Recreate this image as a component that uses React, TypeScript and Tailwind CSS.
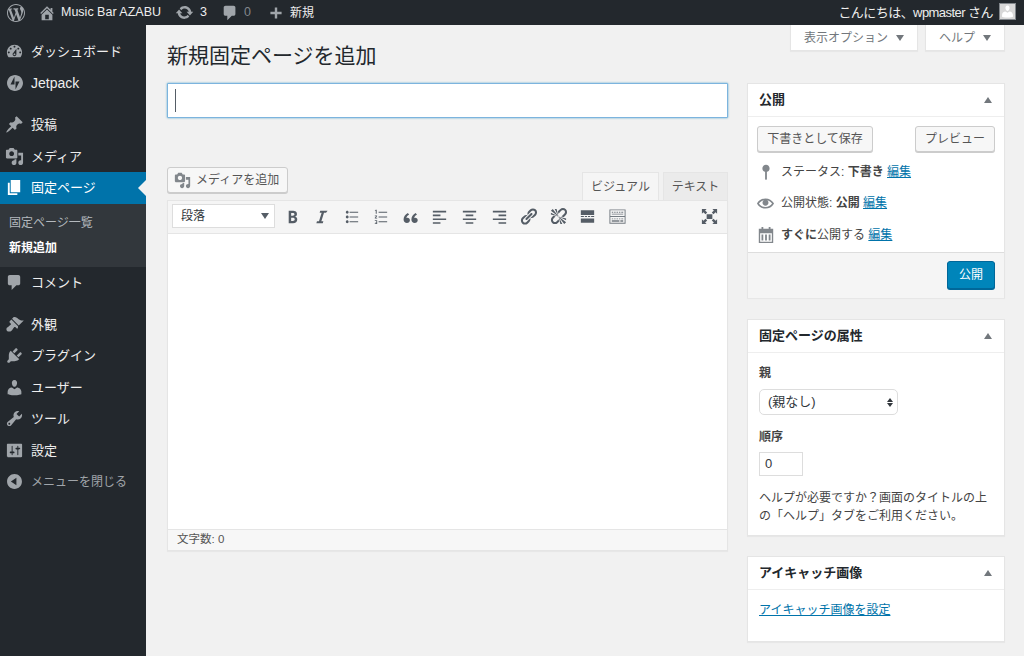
const D = {
  wp: "M20 10c0-5.51-4.49-10-10-10C4.48 0 0 4.49 0 10c0 5.52 4.48 10 10 10 5.51 0 10-4.48 10-10zM7.78 15.37L4.37 6.22c.55-.02 1.17-.08 1.17-.08.5-.06.44-1.13-.06-1.11 0 0-1.45.11-2.37.11-.18 0-.37 0-.58-.01C4.12 2.69 6.87 1.11 10 1.11c2.33 0 4.45.87 6.05 2.34-.68-.11-1.65.39-1.65 1.58 0 .74.45 1.36.9 2.1.35.61.55 1.36.55 2.46 0 1.49-1.4 5-1.4 5l-3.03-8.37c.54-.02.82-.17.82-.17.5-.05.44-1.25-.06-1.22 0 0-1.44.12-2.38.12-.87 0-2.33-.12-2.33-.12-.5-.03-.56 1.2-.06 1.22l.92.08 1.26 3.41zM17.41 10c.24-.64.74-1.87.43-4.25.7 1.29 1.05 2.71 1.05 4.25 0 3.29-1.73 6.24-4.4 7.78.97-2.59 1.94-5.2 2.92-7.78zM6.1 18.09C3.12 16.65 1.11 13.53 1.11 10c0-1.3.23-2.48.72-3.59C3.25 10.3 4.67 14.2 6.1 18.09zm4.03-6.63l2.58 6.98c-.86.29-1.76.45-2.71.45-.79 0-1.57-.11-2.29-.33.81-2.38 1.62-4.74 2.42-7.1z",
  home: "M16 8.5l1.53 1.53-1.06 1.06L10 4.62l-6.47 6.47-1.06-1.06L10 2.5l4 4v-2h2v4zm-6-2.46l6 5.99V18H4v-5.97zM12 17v-5H8v5h4z",
  update: "M10.2 3.28c3.53 0 6.43 2.61 6.92 6h2.08l-3.5 4-3.5-4h2.32c-.45-1.97-2.21-3.45-4.32-3.45-1.45 0-2.73.71-3.54 1.78L4.95 5.66C6.23 4.2 8.11 3.28 10.2 3.28zm-.4 13.44c-3.52 0-6.43-2.61-6.92-6H.8l3.5-4c1.17 1.33 2.33 2.67 3.5 4H5.48c.45 1.97 2.21 3.45 4.32 3.45 1.45 0 2.73-.71 3.54-1.78l1.71 1.95c-1.28 1.46-3.15 2.38-5.25 2.38z",
  comment: "M5 2h9c1.1 0 2 .9 2 2v7c0 1.1-.9 2-2 2h-2l-5 5v-5H5c-1.1 0-2-.9-2-2V4c0-1.1.9-2 2-2z",
  plus: "M17 8.5v3h-5.5V17h-3v-5.5H3v-3h5.5V3h3v5.5z",
  dashboard: "M3.76 16h12.48c1.1-1.37 1.76-3.11 1.76-5 0-4.42-3.58-8-8-8s-8 3.58-8 8c0 1.89.66 3.63 1.76 5zM10 4c.55 0 1 .45 1 1s-.45 1-1 1-1-.45-1-1 .45-1 1-1zM6 6c.55 0 1 .45 1 1s-.45 1-1 1-1-.45-1-1 .45-1 1-1zm8 0c.55 0 1 .45 1 1s-.45 1-1 1-1-.45-1-1 .45-1 1-1zm-5.37 5.55L12 7v6c0 1.1-.9 2-2 2s-2-.9-2-2c0-.57.24-1.08.63-1.45zM4 10c.55 0 1 .45 1 1s-.45 1-1 1-1-.45-1-1 .45-1 1-1zm12 0c.55 0 1 .45 1 1s-.45 1-1 1-1-.45-1-1 .45-1 1-1zm-5 3c0-.55-.45-1-1-1s-1 .45-1 1 .45 1 1 1 1-.45 1-1z",
  pin: "M10.44 3.02l1.82-1.82 6.36 6.35-1.83 1.82c-1.05-.68-2.48-.57-3.41.36l-.75.75c-.92.93-1.04 2.35-.35 3.41l-1.83 1.82-2.41-2.41-2.8 2.79c-.42.42-3.38 2.71-3.8 2.29s1.86-3.39 2.28-3.81l2.79-2.79L4.1 9.36l1.83-1.82c1.05.69 2.48.57 3.4-.36l.75-.75c.93-.92 1.05-2.35.36-3.41z",
  media: "M13 11V4c0-.55-.45-1-1-1h-1.67L9 1H5L3.67 3H2c-.55 0-1 .45-1 1v7c0 .55.45 1 1 1h10c.55 0 1-.45 1-1zM7 4.5c1.38 0 2.5 1.12 2.5 2.5S8.38 9.5 7 9.5 4.5 8.38 4.5 7 5.62 4.5 7 4.5zM14 6h5v10.5c0 1.38-1.12 2.5-2.5 2.5S14 17.88 14 16.5s1.12-2.5 2.5-2.5c.17 0 .34.02.5.05V9h-3V6zm-4 8.05V13h2v3.5c0 1.38-1.12 2.5-2.5 2.5S7 17.88 7 16.5 8.12 14 9.5 14c.17 0 .34.02.5.05z",
  page: "M6 15V2h10v13H6zm-1 1h8v2H3V5h2v11z",
  appearance: "M14.48 11.06L7.41 3.99l1.5-1.5c.5-.56 2.3-.47 3.51.32 1.21.8 1.43 1.28 2.91 2.1 1.18.64 2.45 1.26 4.45.85zm-.71.71L6.7 4.7 4.93 6.47c-.39.39-.39 1.02 0 1.41l1.06 1.06c.39.39.39 1.03 0 1.42-.6.6-1.43 1.11-2.21 1.69-.35.26-.7.53-1.01.84C1.43 13.23.99 15.61 2.2 16.8c1.19 1.2 3.57.76 4.92-.6.31-.31.58-.66.84-1.01.58-.78 1.09-1.61 1.69-2.21.39-.39 1.03-.39 1.42 0l1.06 1.06c.39.39 1.02.39 1.41 0z",
  plugins: "M13.11 4.36L9.87 7.6 8 5.73l3.24-3.24c.35-.34 1.05-.2 1.56.32.52.51.66 1.21.31 1.55zm-8 1.77l.91-1.12 9.01 9.01-1.19.84c-.71.71-2.63 1.16-3.82 1.16H6.14L4.9 17.26c-.59.59-1.54.59-2.12 0-.59-.58-.59-1.53 0-2.12l1.24-1.24v-3.88c0-1.13.4-3.19 1.09-3.89zm7.26 3.97l3.24-3.24c.34-.35 1.04-.21 1.55.31.52.51.66 1.21.31 1.55l-3.24 3.25z",
  users: "M10 9.25c-2.27 0-2.73-3.44-2.73-3.44C7 4.02 7.82 2 9.97 2c2.16 0 2.98 2.02 2.71 3.81 0 0-.41 3.44-2.68 3.44zm0 2.57L12.72 10c2.39 0 4.52 2.33 4.52 4.53v2.49s-3.65 1.13-7.24 1.13c-3.65 0-7.24-1.13-7.24-1.13v-2.49c0-2.25 1.94-4.48 4.47-4.48z",
  tools: "M16.68 9.77c-1.34 1.34-3.3 1.67-4.95.99l-5.41 6.52c-.99.99-2.59.99-3.58 0s-.99-2.59 0-3.57l6.52-5.42c-.68-1.65-.35-3.61.99-4.95 1.28-1.28 3.12-1.62 4.72-1.06l-2.89 2.89 2.82 2.82 2.86-2.87c.53 1.58.18 3.39-1.08 4.65zM3.81 16.21c.4.39 1.04.39 1.43 0 .4-.4.4-1.04 0-1.43-.39-.4-1.03-.4-1.43 0-.39.39-.39 1.03 0 1.43z",
  settings: "M18 16V4c0-.55-.45-1-1-1H3c-.55 0-1 .45-1 1v12c0 .55.45 1 1 1h14c.55 0 1-.45 1-1zM8 11h1c.55 0 1 .45 1 1s-.45 1-1 1H8v1.5c0 .28-.22.5-.5.5s-.5-.22-.5-.5V13H6c-.55 0-1-.45-1-1s.45-1 1-1h1V5.5c0-.28.22-.5.5-.5s.5.22.5.5V11zm5-2h-1c-.55 0-1-.45-1-1s.45-1 1-1h1V5.5c0-.28.22-.5.5-.5s.5.22.5.5V7h1c.55 0 1 .45 1 1s-.45 1-1 1h-1v5.5c0 .28-.22.5-.5.5s-.5-.22-.5-.5V9z",
  collapse: "M10 2.16c4.33 0 7.84 3.51 7.84 7.84s-3.51 7.84-7.84 7.84S2.16 14.33 2.16 10 5.71 2.16 10 2.16zm2 11.72V6.12L6.18 9.97z",
  bold: "M6 4v13h4.54c1.37 0 2.46-.33 3.26-1 .8-.66 1.2-1.58 1.2-2.77 0-.84-.17-1.51-.51-2.01s-.9-.85-1.67-1.03v-.09c.57-.1 1.02-.4 1.36-.9s.51-1.13.51-1.91c0-1.14-.39-1.98-1.17-2.5C12.75 4.26 11.5 4 9.78 4H6zm2.57 5.15V6.26h1.36c.73 0 1.27.11 1.61.32.34.22.51.58.51 1.07 0 .54-.16.92-.47 1.15s-.82.35-1.51.35h-1.5zm0 2.19h1.6c1.44 0 2.16.53 2.16 1.61 0 .6-.17 1.05-.51 1.34s-.86.44-1.57.44H8.57v-3.39z",
  italic: "M14.78 6h-2.13l-2.8 9h2.12l-.62 2H4.6l.62-2h2.14l2.8-9H8.03l.62-2h7.75z",
  ul: "M5.5 7C4.67 7 4 6.33 4 5.5 4 4.68 4.67 4 5.5 4 6.32 4 7 4.68 7 5.5 7 6.33 6.32 7 5.5 7zM8 5h9v1H8V5zm-2.5 7c-.83 0-1.5-.67-1.5-1.5C4 9.68 4.67 9 5.5 9c.82 0 1.5.68 1.5 1.5 0 .83-.68 1.5-1.5 1.5zM8 10h9v1H8v-1zm-2.5 7c-.83 0-1.5-.67-1.5-1.5 0-.82.67-1.5 1.5-1.5.82 0 1.5.68 1.5 1.5 0 .83-.68 1.5-1.5 1.5zM8 15h9v1H8v-1z",
  ol: "M8 5h9v1H8zM8 10h9v1H8zM8 15h9v1H8zM5 3h1v4H5V4H4V3.6zM4 9h2.4v.8L5 11.2h1.5v.8H4v-.8l1.4-1.4H4zM4 14h2.5v4H4v-.8h1.6v-.8H4.6v-.7h1v-.9H4z",
  quote: "M9.49 13.22c0-1.22-.93-2.09-2.17-2.09-.33 0-.6.07-.97.2.28-1.3 1.14-2.32 2.48-2.87L7.72 6.9C5.4 8 3.98 10.05 3.98 12.62c0 1.84 1.26 2.98 2.89 2.98 1.51 0 2.62-1.03 2.62-2.38zm6.8 0c0-1.22-.93-2.09-2.17-2.09-.33 0-.6.07-.97.2.28-1.3 1.14-2.32 2.48-2.87L14.52 6.9c-2.32 1.1-3.74 3.15-3.74 5.72 0 1.84 1.26 2.98 2.89 2.98 1.51 0 2.62-1.03 2.62-2.38z",
  alignLeft: "M3 4h14v1.7H3zM3 8h8v1.7H3zM3 12h14v1.7H3zM3 16h8v1.7H3z",
  alignCenter: "M3 4h14v1.7H3zM6 8h8v1.7H6zM3 12h14v1.7H3zM6 16h8v1.7H6z",
  alignRight: "M3 4h14v1.7H3zM9 8h8v1.7H9zM3 12h14v1.7H3zM9 16h8v1.7H9z",
  link: "M17.74 2.76c1.68 1.69 1.68 4.41 0 6.1l-1.53 1.52c-1.12 1.12-2.7 1.47-4.14 1.09l2.62-2.61.76-.77.76-.76c.84-.84.84-2.2 0-3.04-.84-.85-2.2-.85-3.04 0l-.77.76-3.38 3.38c-.37-1.44-.02-3.02 1.1-4.14l1.52-1.53c1.69-1.68 4.42-1.68 6.1 0zM8.59 13.43l5.34-5.34c.42-.42.42-1.1 0-1.52-.44-.43-1.13-.39-1.53 0l-5.33 5.34c-.42.42-.42 1.1 0 1.52.44.43 1.13.39 1.52 0zm-.76 2.29l4.14-4.15c.38 1.44.03 3.02-1.09 4.14l-1.52 1.53c-1.69 1.68-4.41 1.68-6.1 0-1.68-1.68-1.68-4.42 0-6.1l1.53-1.52c1.12-1.12 2.7-1.47 4.14-1.1l-4.14 4.15c-.85.84-.85 2.2 0 3.05.84.84 2.2.84 3.04 0z",
  unlink: "M17.74 2.26c1.68 1.69 1.68 4.41 0 6.1l-1.53 1.52c-.32.33-.69.58-1.08.77L13 10l1.69-1.64.76-.77.76-.76c.84-.84.84-2.2 0-3.04-.84-.85-2.2-.85-3.04 0l-.77.76-.76.76L10 7l-.65-2.14c.19-.38.44-.75.77-1.07l1.52-1.53c1.69-1.68 4.42-1.68 6.1 0zM2 4l8 6-6-8zm4-2l4 8-2-8H6zM2 6l8 4-8-2V6zm7.36 7.69L10 13l.74 2.35-1.38 1.39c-1.69 1.68-4.41 1.68-6.1 0-1.68-1.68-1.68-4.42 0-6.1l1.39-1.38L7 10l-.69.64-1.52 1.53c-.85.84-.85 2.2 0 3.04.84.85 2.2.85 3.04 0zM18 16l-8-6 6 8zm-4 2l-4-8 2 8h2zm4-4l-8-4 8 2v2z",
  more: "M3 3.5h14v5H3zM3 12h14v4.5H3zM3 9.6h3.2v1H3zM7.2 9.6h2.3v1H7.2zM10.5 9.6h2.3v1h-2.3zM13.8 9.6H17v1h-3.2z",
  sink: "M1.5 2.5h17v15h-17zM2.5 3.5v6h15v-6zM2.5 10.5v6h15v-6zM4 5h1.5v1H4zM6.5 5H8v1H6.5zM9 5h1.5v1H9zM11.5 5H13v1h-1.5zM14 5h2v1h-2zM4 7h12v1H4zM4 12h1.5v1H4zM6.5 12H8v1H6.5zM9 12h1.5v1H9zM11.5 12H13v1h-1.5zM14 12h2v1h-2zM4 14h8v1.5H4zM13 14h3v1.5h-3z",
  fullscreen: "M7 7.5h6v5H7zM2 2h5L5.4 3.6 7.6 5.8 5.8 7.6 3.6 5.4 2 7zM18 2v5l-1.6-1.6-2.2 2.2-1.8-1.8 2.2-2.2L13 2zM2 18v-5l1.6 1.6 2.2-2.2 1.8 1.8-2.2 2.2L7 18zM18 18h-5l1.6-1.6-2.2-2.2 1.8-1.8 2.2 2.2L18 13z",
  status: "M14 6c0-2.21-1.79-4-4-4S6 3.79 6 6c0 1.86 1.28 3.41 3 3.86V18l1 1 1-1V9.86c1.72-.45 3-2 3-3.86z",
  eye: "M19.7 9.4C17.7 6 14.1 4 10 4 5.9 4 2.3 6 .3 9.4L0 10l.3.6c2 3.4 5.6 5.4 9.7 5.4 4.1 0 7.7-2 9.7-5.4l.3-.6-.3-.6zM10 14.1c-3.1 0-6-1.6-7.7-4.1C3.6 8 5.7 6.6 8 6.1c-.9.6-1.5 1.7-1.5 2.9 0 1.9 1.6 3.5 3.5 3.5s3.5-1.6 3.5-3.5c0-1.2-.6-2.3-1.5-2.9 2.3.5 4.4 1.9 5.7 3.9-1.7 2.5-4.6 4.1-7.7 4.1z",
  calendar: "M5 1h2v2h6V1h2v2h3v16H2V3h3zM3.5 8v9.5h13V8zM5 9.5h2V16H5zM9 9.5h2V16H9zM13 9.5h2V16h-2z",
};

function Icon({ d, className }: { d: string; className?: string }) {
  return (
    <svg viewBox="0 0 20 20" fill="currentColor" fillRule="evenodd" className={className}>
      <path d={d} />
    </svg>
  );
}

function JetpackIcon({ className }: { className?: string }) {
  return (
    <svg viewBox="0 0 32 32" fill="currentColor" className={className}>
      <path d="M16 0C7.2 0 0 7.2 0 16s7.2 16 16 16 16-7.2 16-16S24.8 0 16 0zM15 19H7l8-16v16zm2 10V13h8l-8 16z" />
    </svg>
  );
}

function AdminBar() {
  return (
    <div className="flex h-[25px] items-center bg-[#23282d] text-[12.5px] text-[#eeeeee]">
      <Icon d={D.wp} className="ml-[7px] h-[18px] w-[18px] text-[#a0a5aa]" />
      <Icon d={D.home} className="ml-[13px] h-[18px] w-[18px] text-[#a0a5aa]" />
      <span className="ml-[5px] whitespace-nowrap">Music Bar AZABU</span>
      <Icon d={D.update} className="ml-[14px] h-[19px] w-[19px] text-[#a0a5aa]" />
      <span className="ml-[6px]">3</span>
      <Icon d={D.comment} className="ml-[14px] h-[18px] w-[18px] text-[#a0a5aa]" />
      <span className="ml-[5px] text-[#82878c]">0</span>
      <Icon d={D.plus} className="ml-[17px] h-[16px] w-[16px] text-[#a0a5aa]" />
      <span className="ml-[6px] text-[12px]">新規</span>
      <div className="ml-auto flex items-center pr-[8px]">
        <span className="text-[13px] tracking-[-0.55px]">こんにちは、wpmaster さん</span>
        <div className="ml-[6px] mb-[2px] flex h-[17px] w-[17px] items-end justify-center overflow-hidden border border-[#82878c] bg-[#d8d8d8]">
          <Icon d={D.users} className="h-[15px] w-[15px] text-white" />
        </div>
      </div>
    </div>
  );
}

function MenuItem({ label, icon, active, dim, labelClass }: { label: string; icon: React.ReactNode; active?: boolean; dim?: boolean; labelClass?: string }) {
  return (
    <div className={`relative flex h-[31.5px] items-center text-[13px] ${active ? "bg-[#0073aa] text-white" : dim ? "text-[#a0a5aa]" : "text-[#eeeeee]"}`}>
      <div className={`flex w-[31px] justify-center pr-[2px] ${active ? "text-white" : "text-[#a0a5aa]"}`}>{icon}</div>
      <span className={labelClass}>{label}</span>
      {active && (
        <div className="absolute right-0 top-[8px] h-0 w-0 border-y-[8px] border-r-[8px] border-y-transparent border-r-[#f1f1f1]" />
      )}
    </div>
  );
}

function Sidebar() {
  const ic = "h-[19px] w-[19px]";
  return (
    <div className="w-[146px] shrink-0 bg-[#23282d] pt-[11px]">
      <MenuItem label="ダッシュボード" icon={<Icon d={D.dashboard} className={ic} />} />
      <MenuItem label="Jetpack" labelClass="text-[14px]" icon={<JetpackIcon className="h-[16px] w-[16px]" />} />
      <div className="h-[10px]" />
      <MenuItem label="投稿" icon={<Icon d={D.pin} className={ic} />} />
      <MenuItem label="メディア" icon={<Icon d={D.media} className={ic} />} />
      <MenuItem label="固定ページ" active icon={<Icon d={D.page} className={ic} />} />
      <div className="flex h-[63.5px] flex-col gap-[7px] bg-[#32373c] pl-[9px] pt-[10px] text-[12px] leading-[18px]">
        <span className="text-[#b4b9be]">固定ページ一覧</span>
        <span className="font-bold text-white">新規追加</span>
      </div>
      <MenuItem label="コメント" icon={<Icon d={D.comment} className={ic} />} />
      <div className="h-[10px]" />
      <MenuItem label="外観" icon={<Icon d={D.appearance} className={ic} />} />
      <MenuItem label="プラグイン" icon={<Icon d={D.plugins} className={ic} />} />
      <MenuItem label="ユーザー" icon={<Icon d={D.users} className={ic} />} />
      <MenuItem label="ツール" icon={<Icon d={D.tools} className={ic} />} />
      <MenuItem label="設定" icon={<Icon d={D.settings} className={ic} />} />
      <MenuItem label="メニューを閉じる" labelClass="text-[12px]" dim icon={<Icon d={D.collapse} className={ic} />} />
    </div>
  );
}

function ToolButton({ d, iconClass }: { d: string; iconClass?: string }) {
  return (
    <div className="flex h-[20px] w-[20px] items-center justify-center text-[#555d66]">
      <Icon d={d} className={iconClass ?? "h-[19px] w-[19px]"} />
    </div>
  );
}

function Editor() {
  return (
    <div className="flex w-[561px] flex-col pt-[16px]">
      <h1 className="h-[30px] text-[21px] leading-[30px] text-[#23282d]">新規固定ページを追加</h1>
      <div className="mt-[12px] flex h-[35px] items-center rounded-[1px] border border-[#7cb4de] bg-white pl-[7px] shadow-[0_0_2px_rgba(30,140,190,0.8)]">
        <div className="h-[23px] w-[1px] bg-[#555d66]" />
      </div>
      <div className="mt-[49px] flex h-[33px] justify-between">
        <button className="flex h-[26px] w-[121px] items-center gap-[5px] rounded-[3px] border border-[#cccccc] bg-[#f7f7f7] pl-[6px] text-[12px] text-[#555555] shadow-[0_1px_0_#cccccc]">
          <Icon d={D.media} className="h-[17px] w-[17px] text-[#82878c]" />
          メディアを追加
        </button>
        <div className="flex items-end gap-[4px] text-[12px] text-[#555555]">
          <div className="flex h-[28px] w-[77px] items-center justify-center border border-b-0 border-[#e5e5e5] bg-[#f5f5f5]">ビジュアル</div>
          <div className="flex h-[28px] w-[65px] items-center justify-center border border-b-0 border-[#e5e5e5] bg-[#ebebeb]">テキスト</div>
        </div>
      </div>
      <div className="flex h-[351px] flex-col border border-[#e5e5e5] bg-white shadow-[0_1px_1px_rgba(0,0,0,0.04)]">
        <div className="flex h-[33px] shrink-0 items-center border-b border-[#e5e5e5] bg-[#f5f5f5] pb-[2px] pl-[4px] pr-[8px]">
          <div className="flex h-[24px] w-[103px] items-center justify-between border border-[#dddddd] bg-white pl-[8px] pr-[4px] text-[12px] text-[#32373c]">
            段落
            <span className="mr-[1px] h-0 w-0 border-x-[4px] border-t-[6px] border-x-transparent border-t-[#555d66]" />
          </div>
          <div className="ml-[7px] flex gap-[9.6px]">
            <ToolButton d={D.bold} />
            <ToolButton d={D.italic} />
            <ToolButton d={D.ul} />
            <ToolButton d={D.ol} />
            <ToolButton d={D.quote} iconClass="h-[23px] w-[23px] shrink-0" />
            <ToolButton d={D.alignLeft} />
            <ToolButton d={D.alignCenter} />
            <ToolButton d={D.alignRight} />
            <ToolButton d={D.link} />
            <ToolButton d={D.unlink} />
            <ToolButton d={D.more} />
            <ToolButton d={D.sink} iconClass="h-[19px] w-[19px] opacity-80" />
          </div>
          <div className="ml-auto">
            <ToolButton d={D.fullscreen} />
          </div>
        </div>
        <div className="flex-1" />
        <div className="flex h-[21px] shrink-0 items-center border-t border-[#e5e5e5] bg-[#f7f7f7] pl-[9px] text-[11.5px] text-[#555555]">文字数: 0</div>
      </div>
    </div>
  );
}

function BoxHeader({ title }: { title: string }) {
  return (
    <div className="flex h-[33px] shrink-0 items-center justify-between border-b border-[#eeeeee] pl-[11px] pr-[12px] text-[13px] font-bold text-[#23282d]">
      {title}
      <span className="h-0 w-0 border-x-[4px] border-b-[6px] border-x-transparent border-b-[#72777c]" />
    </div>
  );
}

function StatusRow({ d, iconClass, children }: { d: string; iconClass?: string; children: React.ReactNode }) {
  return (
    <div className="flex h-[31.5px] items-center text-[12px] text-[#444444]">
      <div className="flex w-[17px] justify-center text-[#82878c]">
        <Icon d={d} className={iconClass ?? "h-[18px] w-[18px] shrink-0"} />
      </div>
      <span className="ml-[7px]">{children}</span>
    </div>
  );
}

function EditLink() {
  return <a className="text-[#0073aa] underline">編集</a>;
}

function SideColumn() {
  const box = "border border-[#e5e5e5] bg-white shadow-[0_1px_1px_rgba(0,0,0,0.04)]";
  const tab = "flex h-[26px] items-center justify-center gap-[8px] border border-t-0 border-[#e5e5e5] bg-white text-[12px] text-[#72777c] shadow-[0_1px_1px_rgba(0,0,0,0.04)]";
  const arrow = "h-0 w-0 border-x-[4px] border-t-[6px] border-x-transparent border-t-[#72777c]";
  const btn = "flex h-[26px] items-center justify-center rounded-[3px] border border-[#cccccc] bg-[#f7f7f7] text-[12px] text-[#555555] shadow-[0_1px_0_#cccccc]";
  return (
    <div className="ml-[19px] flex w-[258px] flex-col">
      <div className="flex justify-end gap-[7px]">
        <div className={`${tab} w-[128px]`}>表示オプション<span className={arrow} /></div>
        <div className={`${tab} w-[80px]`}>ヘルプ<span className={arrow} /></div>
      </div>
      <div className={`${box} mt-[32px] h-[215px]`}>
        <BoxHeader title="公開" />
        <div className="flex justify-between px-[9px] pt-[9px]">
          <button className={`${btn} w-[116px]`}>下書きとして保存</button>
          <button className={`${btn} w-[80px]`}>プレビュー</button>
        </div>
        <div className="px-[9px] pt-[4px]">
          <StatusRow d={D.status}>ステータス: <b>下書き</b> <EditLink /></StatusRow>
          <StatusRow d={D.eye} iconClass="h-[17px] w-[17px] shrink-0">公開状態: <b>公開</b> <EditLink /></StatusRow>
          <StatusRow d={D.calendar}><b>すぐに</b>公開する <EditLink /></StatusRow>
        </div>
        <div className="mt-[1px] flex h-[46px] items-center justify-end border-t border-[#dddddd] bg-[#f5f5f5] pr-[9px]">
          <button className="flex h-[28px] w-[48px] items-center justify-center rounded-[3px] border border-[#006799] bg-[#0085ba] text-[12px] text-white shadow-[0_1px_0_#006799]">公開</button>
        </div>
      </div>
      <div className={`${box} mt-[21px] h-[217px]`}>
        <BoxHeader title="固定ページの属性" />
        <div className="px-[11px] text-[12px] text-[#444444]">
          <div className="pt-[11px] font-bold leading-[18px]">親</div>
          <div className="mt-[7px] flex h-[26px] w-[139px] items-center justify-between rounded-[5px] border border-[#dddddd] bg-white pl-[8px] pr-[4px] text-[13px] text-[#32373c]">
            (親なし)
            <span className="flex flex-col gap-[1px]">
              <span className="h-0 w-0 border-x-[3px] border-b-[4px] border-x-transparent border-b-[#32373c]" />
              <span className="h-0 w-0 border-x-[3px] border-t-[4px] border-x-transparent border-t-[#32373c]" />
            </span>
          </div>
          <div className="mt-[13px] font-bold leading-[18px]">順序</div>
          <div className="mt-[6px] flex h-[24px] w-[44px] items-center border border-[#dddddd] bg-white pl-[5px] text-[13px] text-[#32373c]">0</div>
          <p className="mt-[13px] leading-[18px]">ヘルプが必要ですか？画面のタイトルの上の「ヘルプ」タブをご利用ください。</p>
        </div>
      </div>
      <div className={`${box} mt-[20px] h-[86px]`}>
        <BoxHeader title="アイキャッチ画像" />
        <div className="px-[11px] pt-[11px] text-[12px] leading-[18px]">
          <a className="text-[#0073aa] underline">アイキャッチ画像を設定</a>
        </div>
      </div>
    </div>
  );
}

export default function App() {
  return (
    <div
      className="flex h-[656px] w-[1024px] flex-col overflow-hidden bg-[#f1f1f1]"
      style={{ fontFamily: '"Liberation Sans", "Noto Sans CJK JP", sans-serif' }}
    >
      <AdminBar />
      <div className="flex flex-1">
        <Sidebar />
        <div className="flex pl-[21px]">
          <Editor />
          <SideColumn />
        </div>
      </div>
    </div>
  );
}
